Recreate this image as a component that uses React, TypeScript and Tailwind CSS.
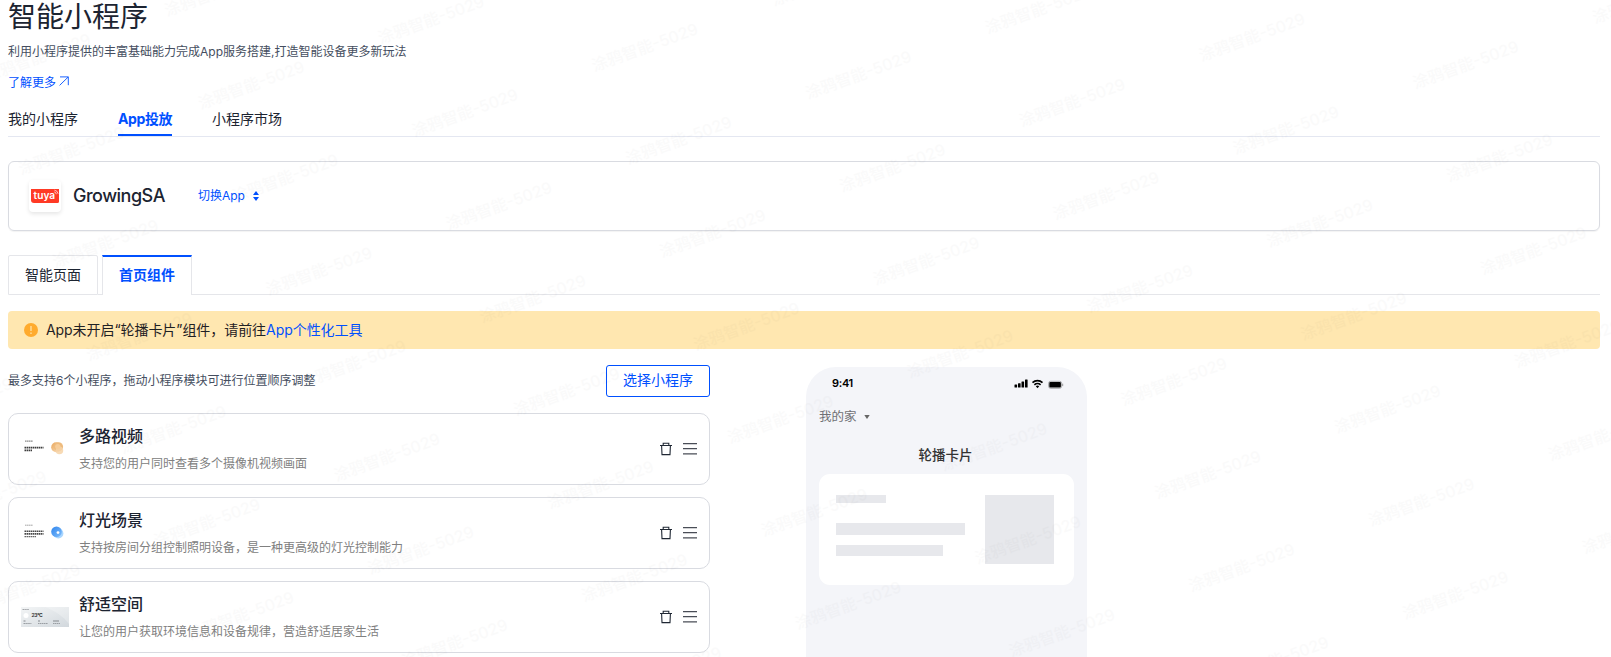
import { ReactNode } from "react"

interface MiniProgram {
    name: string
    desc: string
    thumb: ReactNode
}

function VideoThumb() {
    return (
        <svg width="48" height="20" viewBox="0 0 48 20">
            <defs>
                <linearGradient id="video" x1="0" y1="0" x2="1" y2="1">
                    <stop offset="0" stopColor="#e9a558" />
                    <stop offset="1" stopColor="#fae3c4" />
                </linearGradient>
            </defs>
            <path d="M4 2.2h8" stroke="#8a8a8a" strokeWidth="1.2" strokeDasharray="1.6 .4" />
            <path d="M3.5 8.6h19M3.5 11.4h8" stroke="#3c3c3c" strokeWidth="1.8" strokeDasharray="1.5 .5" />
            <circle cx="35.2" cy="8.3" r="5" fill="url(#video)" />
            <circle cx="37.5" cy="7.8" r="4.6" fill="#eebb7d" />
            <circle cx="38.4" cy="11.4" r="3.8" fill="#f6d4a8" opacity=".85" />
            <circle cx="36.8" cy="7.6" r="2.6" fill="#f7cd99" />
        </svg>
    )
}

function LightThumb() {
    return (
        <svg width="48" height="20" viewBox="0 0 48 20">
            <defs>
                <linearGradient id="light" x1="0" y1="0" x2="1" y2="1">
                    <stop offset="0" stopColor="#2f86ee" />
                    <stop offset="1" stopColor="#7fbcfa" />
                </linearGradient>
            </defs>
            <path d="M4 2.2h8" stroke="#a5a5a5" strokeWidth="1" strokeDasharray="1.6 .4" />
            <path d="M3.5 8.2h19M3.5 10.9h19" stroke="#484848" strokeWidth="1.6" strokeDasharray="1.5 .5" />
            <path d="M3.5 13.6h12" stroke="#666" strokeWidth="1.4" strokeDasharray="1.5 .5" />
            <circle cx="37.3" cy="10.4" r="5.1" fill="#a9d6ff" />
            <circle cx="35.5" cy="8.8" r="5.3" fill="url(#light)" />
            <circle cx="37" cy="9.6" r="1.4" fill="#fff" />
        </svg>
    )
}

function SpaceThumb() {
    return (
        <svg width="48" height="20" viewBox="0 0 48 20">
            <defs>
                <linearGradient id="space" x1="0" y1="0" x2="1" y2="1">
                    <stop offset="0" stopColor="#f3f5f6" />
                    <stop offset="1" stopColor="#d2d8dd" />
                </linearGradient>
            </defs>
            <rect width="48" height="20" fill="url(#space)" />
            <path d="M24 0C34 4 42 9 48 17V0Z" fill="#fff" opacity=".25" />
            <path d="M1.5 2.5h6.5" stroke="#a3a6aa" strokeDasharray="1.5 .4" />
            <circle cx="5" cy="8.5" r="2.5" fill="#fff" />
            <text x="10.5" y="9.9" fontSize="5" fontWeight="700" fill="#333" textLength="11.3">
                23°C
            </text>
            <path d="M2.5 14h2M17 14h2M32 14h6" stroke="#85898e" />
            <path d="M2.5 16.5h8M17 16.5h10M32 16.5h7" stroke="#9a9ea3" strokeDasharray="1.5 .4" />
        </svg>
    )
}

const programs: MiniProgram[] = [
    { name: "多路视频", desc: "支持您的用户同时查看多个摄像机视频画面", thumb: <VideoThumb /> },
    { name: "灯光场景", desc: "支持按房间分组控制照明设备，是一种更高级的灯光控制能力", thumb: <LightThumb /> },
    { name: "舒适空间", desc: "让您的用户获取环境信息和设备规律，营造舒适居家生活", thumb: <SpaceThumb /> },
]

function ProgramCard({ program }: { program: MiniProgram }) {
    return (
        <div className="flex h-[72px] items-center rounded-[10px] border border-[#d9dbe1] pl-3 pr-3">
            <div className="w-12 shrink-0">{program.thumb}</div>
            <div className="ml-2.5 flex-1 pt-px">
                <div className="text-base leading-6 font-medium text-[#1c2431]">{program.name}</div>
                <div className="mt-1 text-xs leading-6 text-[#808080]">{program.desc}</div>
            </div>
            <svg width="12" height="14" viewBox="0 0 12 14" fill="none" stroke="#1f2733" strokeWidth="1.1">
                <path d="M0 3.5h12M3.2 3.3V1.2h5.6v2.1M1.6 3.5l.4 9.1h8l.4-9.1" />
            </svg>
            <svg className="ml-[11px]" width="14" height="14" viewBox="0 0 14 14" stroke="#4a4e57" strokeWidth="1.3">
                <path d="M0 1.7h14M0 6.7h14M0 11.8h14" />
            </svg>
        </div>
    )
}

function PhonePreview() {
    return (
        <div className="h-[290px] w-[281px] rounded-t-[30px] bg-[#f4f5f9] px-[13px]">
            <div className="flex h-8 items-center justify-between pl-[13px] pr-[10px]">
                <span className="text-[11px] font-semibold tracking-[-0.3px] text-black">9:41</span>
                <svg width="50" height="10" viewBox="0 0 50 10" className="mt-px">
                    <rect x="0.5" y="5.6" width="2.6" height="3" rx=".5" />
                    <rect x="4" y="4.2" width="2.6" height="4.4" rx=".5" />
                    <rect x="7.5" y="2.4" width="2.6" height="6.2" rx=".5" />
                    <rect x="11" y=".4" width="2.6" height="8.2" rx=".5" />
                    <path d="M18.5 3.6a7.2 7.2 0 0 1 10 0M20.4 5.8a4.5 4.5 0 0 1 6.2 0" fill="none" stroke="#000" strokeWidth="1.6" />
                    <path d="M21.8 7.3a2.5 2.5 0 0 1 3.4 0L23.5 9.3Z" />
                    <rect x="34.6" y="2.3" width="13" height="7" rx="2" fill="none" stroke="#8a8a8c" strokeWidth=".7" />
                    <rect x="35.3" y="3" width="11.6" height="5.6" rx="1" />
                    <path d="M48.7 4.7v2.4" stroke="#999" />
                </svg>
            </div>
            <div className="mt-[7px] flex items-center text-[12.5px] leading-[22px] text-[#6f7074]">
                我的家
                <svg className="ml-[7px]" width="6" height="4" viewBox="0 0 6 4" fill="#666">
                    <path d="M.3 0h5.4L3 4Z" />
                </svg>
            </div>
            <div className="mt-[17px] pr-0.5 text-center text-[13.5px] leading-5 font-medium text-[#333]">轮播卡片</div>
            <div className="mt-[9px] flex h-[111px] justify-between rounded-[11px] bg-white pt-[21px] pr-5 pl-[17px]">
                <div>
                    <div className="h-2 w-[50px] bg-[#e7e8ec]" />
                    <div className="mt-5 h-3 w-[129px] bg-[#e7e8ec]" />
                    <div className="mt-2.5 h-[11px] w-[107px] bg-[#e7e8ec]" />
                </div>
                <div className="h-[69px] w-[69px] bg-[#e7e8ec]" />
            </div>
        </div>
    )
}

// Repeating account label, laid on a grid that is turned by 20 degrees
function Watermark() {
    const marks: { x: number; y: number }[] = []
    for (let row = -12; row <= 12; row++) {
        for (let col = -12; col <= 12; col++) {
            const x = 1201.5 + col * 179.8 + row * 33.9
            const y = 61.5 - col * 65.4 + row * 93
            if (x > -105 && x < 1611 && y > 0 && y < 700) marks.push({ x, y })
        }
    }
    return (
        <svg className="pointer-events-none absolute inset-0 h-full w-full opacity-[0.016]" viewBox="0 0 1611 657" fontSize="16" fontWeight="500" fill="#000000">
            {marks.map(({ x, y }) => (
                <text key={`${x}:${y}`} transform={`translate(${x} ${y}) rotate(-20)`}>
                    涂鸦智能-5029
                </text>
            ))}
        </svg>
    )
}

export default function App() {
    return (
        <div className="relative h-[657px] w-full overflow-hidden bg-white pr-[11px] pl-2 font-['Inter','Noto_Sans_CJK_SC',sans-serif] text-[#1c2431]">
            <h1 className="h-8 pt-px text-[28px] leading-8">智能小程序</h1>
            <p className="mt-2.5 text-xs leading-5 text-[#454e60]">利用小程序提供的丰富基础能力完成App服务搭建,打造智能设备更多新玩法</p>
            <a className="mt-[11px] flex h-5 items-center text-xs leading-5 text-[#0050ff]">
                了解更多
                <svg className="mb-[5px] ml-[3px]" width="10" height="10" viewBox="0 0 10 10" fill="none" stroke="#0050ff" strokeWidth=".9">
                    <path d="M1 .9h8.3v8.3M9.2 1 .6 9.4" />
                </svg>
            </a>
            <nav className="mt-[11px] flex h-[33px] gap-10 border-b border-[#e4e7f1] text-sm">
                <div className="leading-[30px]">我的小程序</div>
                <div className="h-8 border-b-2 border-[#0050ff] leading-[30px] font-bold tracking-[-0.4px] text-[#0050ff]">App投放</div>
                <div className="leading-[30px]">小程序市场</div>
            </nav>

            <section className="mt-6 flex h-[70px] items-center rounded-md border border-[#d9dbe1] pl-5 shadow-[0_1px_1px_rgba(0,0,0,0.05)]">
                <div className="flex h-8 w-8 items-center justify-center rounded-sm bg-white shadow-[0_2px_4px_rgba(0,0,0,0.1)]">
                    <svg width="28" height="14" viewBox="0 0 28 14">
                        <path d="M0 0h28v12.5q0 1.5-1.5 1.5H3Q0 14 0 11Z" fill="#ff3a25" />
                        <text x="2.6" y="9.8" fontSize="9.5" fontWeight="600" fill="#fff" textLength="21.5" lengthAdjust="spacingAndGlyphs">
                            tuya
                        </text>
                        <path d="M23.6 3q1.5.3 1.7 1.8M23.8 1.2q2.8.4 3.2 3.2" fill="none" stroke="#fff" strokeWidth=".7" strokeLinecap="round" />
                    </svg>
                </div>
                <span className="ml-3 text-lg font-medium tracking-[-0.5px]">GrowingSA</span>
                <a className="ml-[33px] flex items-center text-xs text-[#0050ff]">
                    切换App
                    <svg className="ml-2" width="6" height="10" viewBox="0 0 6 10" fill="#0050ff">
                        <path d="M3 0 6 4H0ZM3 10 0 6h6Z" />
                    </svg>
                </a>
            </section>

            <div className="mt-6 flex h-10 items-stretch text-sm">
                <div className="w-[90px] rounded-t-xs border border-[#e5e6ea] text-center leading-[38px]">智能页面</div>
                <div className="w-1 border-b border-[#e5e6ea]" />
                <div className="w-[90px] border-x border-t-2 border-x-[#e5e6ea] border-t-[#0050ff] text-center leading-[35px] font-bold text-[#0050ff]">首页组件</div>
                <div className="flex-1 border-b border-[#e5e6ea]" />
            </div>

            <div className="mt-4 flex h-[38px] items-center rounded bg-[#ffe7b0] pl-4 text-sm text-[#1f2124]">
                <svg className="mr-2" width="14" height="14" viewBox="0 0 14 14">
                    <circle cx="7" cy="7" r="7" fill="#ffab2e" />
                    <path d="M7 3v5M7 9.6v1.4" stroke="#ffe7b0" strokeWidth="1.2" />
                </svg>
                <span className="tracking-[-0.06px]">
                    App未开启“轮播卡片”组件，请前往<a className="text-[#0050ff]">App个性化工具</a>
                </span>
            </div>

            <main className="flex">
                <div className="mt-4 w-[702px]">
                    <div className="flex h-8 items-center justify-between">
                        <p className="text-xs text-[#454e60]">最多支持6个小程序，拖动小程序模块可进行位置顺序调整</p>
                        <button className="h-8 w-[104px] rounded-[3px] border border-[#0050ff] pb-0.5 text-sm leading-7 text-[#0050ff]">选择小程序</button>
                    </div>
                    <div className="mt-4 flex flex-col gap-3">
                        {programs.map((program) => (
                            <ProgramCard key={program.name} program={program} />
                        ))}
                    </div>
                </div>
                <div className="mt-[18px] ml-24">
                    <PhonePreview />
                </div>
            </main>

            <Watermark />
        </div>
    )
}
